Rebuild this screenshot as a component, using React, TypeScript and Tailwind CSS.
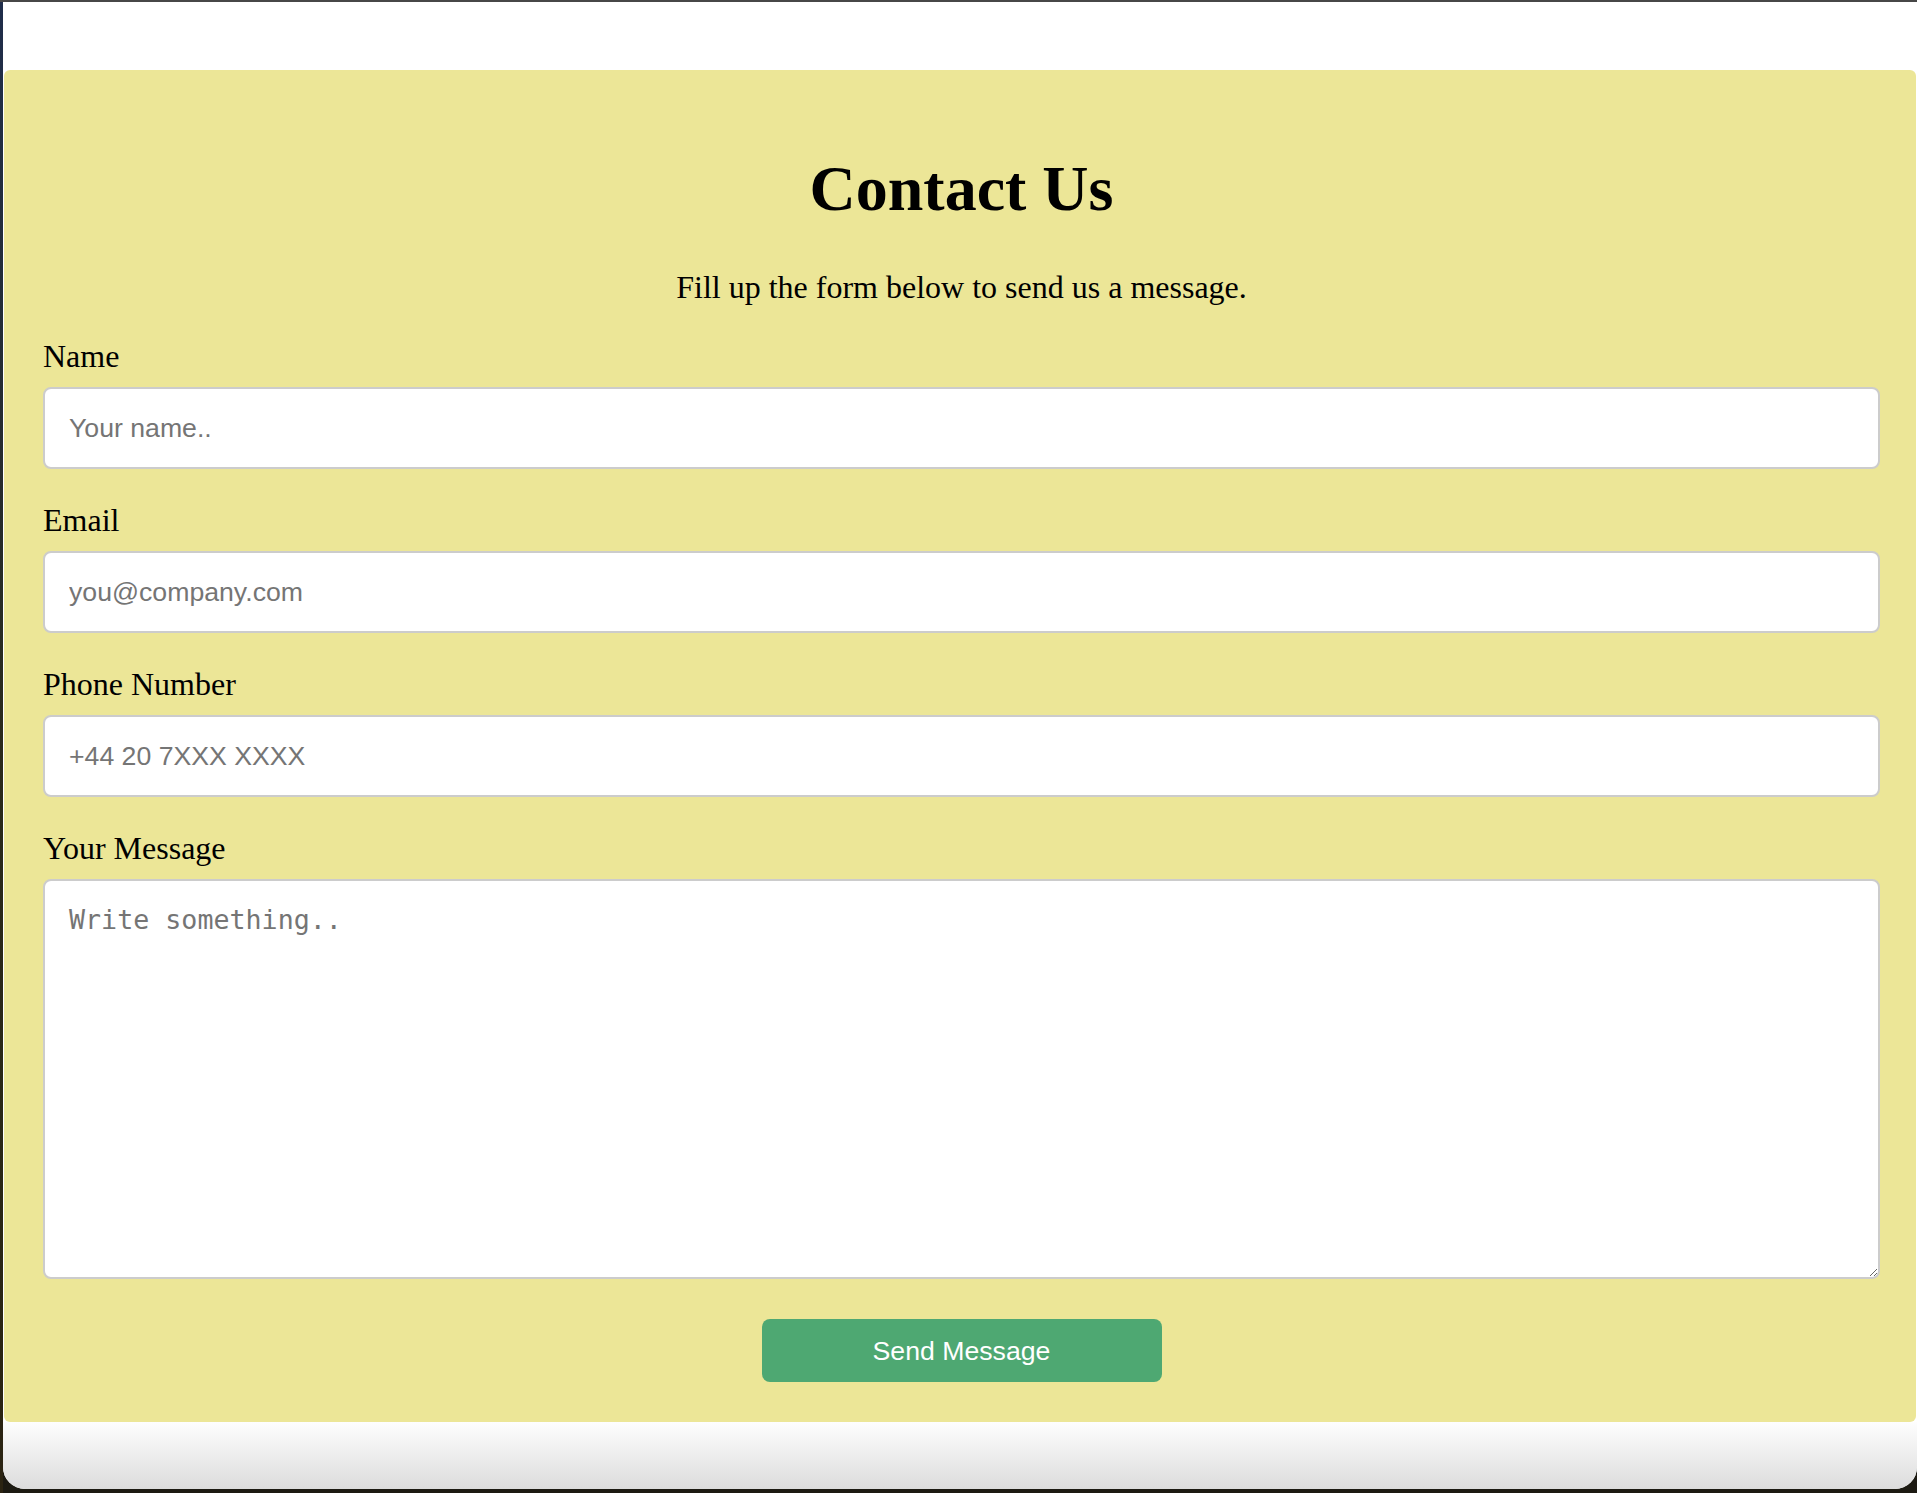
import React from "react";

export default function App() {
  const serif = { fontFamily: '"Liberation Serif", "Times New Roman", serif' } as const;
  return (
    <div className="w-[1917px] h-[1493px] bg-[#1c1a12] flex flex-col overflow-hidden">
      <div className="h-[2px] bg-[#474747] shrink-0" />
      <div className="flex flex-1 min-h-0">
        <div className="w-[3px] shrink-0 bg-linear-to-b from-[#1f2d4a] via-[#2a2a1c] to-[#2b2412]" />
        <div className="flex-1 flex flex-col bg-white rounded-bl-[22px] rounded-br-[22px] mb-[4px] overflow-hidden">
          <div className="h-[68px] shrink-0 bg-white" />
          <div
            className="ml-[1px] w-[1912px] bg-[#ece697] rounded-[6px] pt-[40px] pb-[40px] pl-[39px] pr-[36px] text-black"
            style={serif}
          >
            <h1 className="text-[64px] font-bold leading-[74px] text-center mt-[42px] mb-[43px]">
              Contact Us
            </h1>
            <p className="text-[32px] leading-[37px] text-center mb-[31px]">
              Fill up the form below to send us a message.
            </p>
            <Field label="Name" placeholder="Your name.." />
            <Field label="Email" placeholder="you@company.com" />
            <Field label="Phone Number" placeholder="+44 20 7XXX XXXX" />
            <label className="block text-[32px] leading-[38px] mb-[12px]">Your Message</label>
            <textarea
              placeholder="Write something.."
              className="block w-full h-[400px] bg-white border-2 border-[#cccccc] rounded-[8px] px-[24px] pt-[23px] pb-[18px] text-[26.67px] leading-[32px] placeholder:text-[#757575] text-black outline-none"
              style={{ fontFamily: '"DejaVu Sans Mono", monospace' }}
            />
            <div className="flex justify-center mt-[40px]">
              <button
                className="w-[400px] h-[63px] bg-[#4ea872] text-white rounded-[8px] text-[26.67px]"
                style={{ fontFamily: '"Liberation Sans", Arial, sans-serif' }}
              >
                Send Message
              </button>
            </div>
          </div>
          <div className="flex-1 bg-linear-to-b from-[#fefefe] to-[#dcdcdc]" />
        </div>
      </div>
    </div>
  );
}

function Field({ label, placeholder }: { label: string; placeholder: string }) {
  return (
    <>
      <label className="block text-[32px] leading-[38px] mb-[12px]">{label}</label>
      <input
        type="text"
        placeholder={placeholder}
        className="block w-full h-[82px] bg-white border-2 border-[#cccccc] rounded-[8px] px-[24px] text-[26.67px] placeholder:text-[#757575] text-black outline-none mb-[32px]"
        style={{ fontFamily: '"Liberation Sans", Arial, sans-serif' }}
      />
    </>
  );
}
